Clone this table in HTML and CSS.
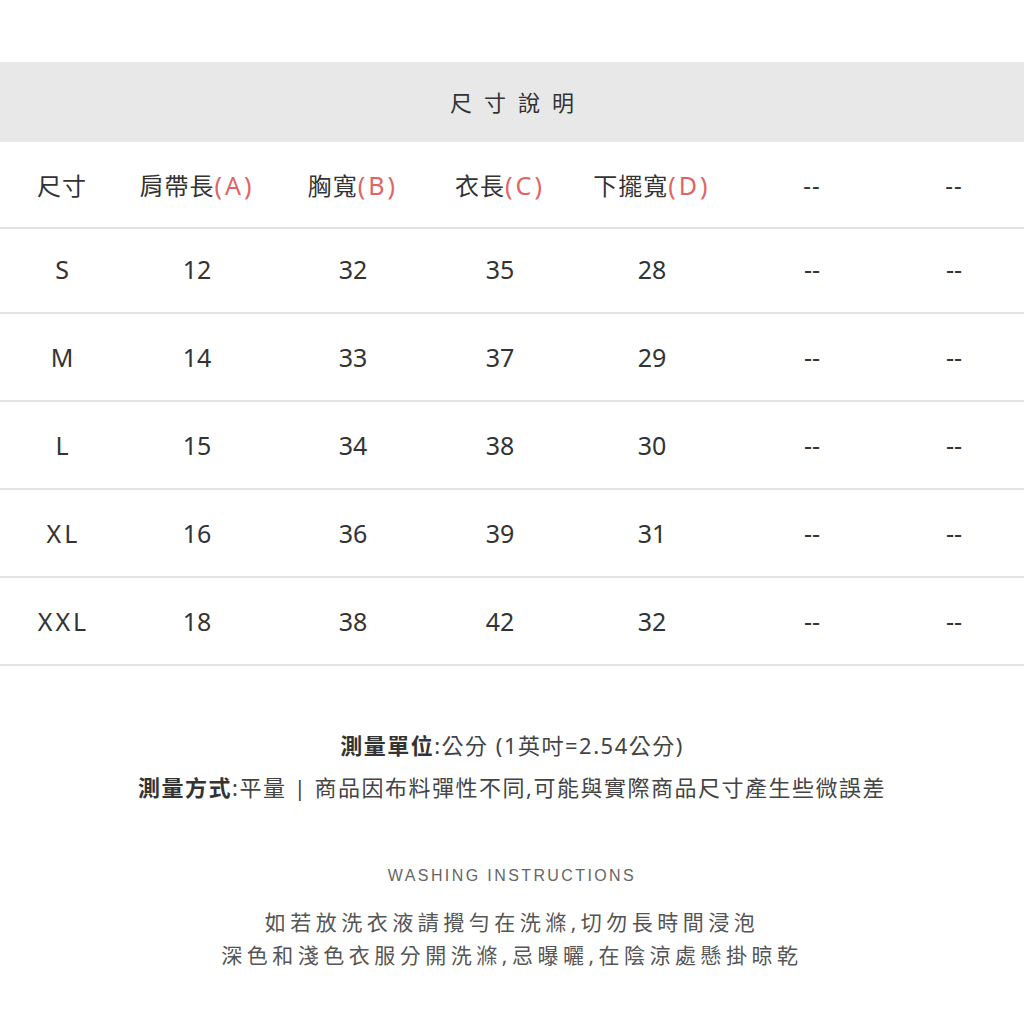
FILE: index.html
```html
<!DOCTYPE html>
<html lang="zh-Hant">
<head>
<meta charset="utf-8">
<link rel="stylesheet" href="styles.css">
</head>
<body>
<div class="page">
  <div class="title-band"><h1 class="title">尺寸說明</h1></div>
  <div class="table">
    <div class="row head">
      <div class="cell">尺寸</div>
      <div class="cell">肩帶長<span class="red">(A)</span></div>
      <div class="cell">胸寬<span class="red">(B)</span></div>
      <div class="cell">衣長<span class="red">(C)</span></div>
      <div class="cell">下擺寬<span class="red">(D)</span></div>
      <div class="cell">--</div>
      <div class="cell">--</div>
    </div>
    <div class="row first">
      <div class="cell sz">S</div><div class="cell">12</div><div class="cell">32</div><div class="cell">35</div><div class="cell">28</div><div class="cell">--</div><div class="cell">--</div>
    </div>
    <div class="row">
      <div class="cell sz">M</div><div class="cell">14</div><div class="cell">33</div><div class="cell">37</div><div class="cell">29</div><div class="cell">--</div><div class="cell">--</div>
    </div>
    <div class="row">
      <div class="cell sz">L</div><div class="cell">15</div><div class="cell">34</div><div class="cell">38</div><div class="cell">30</div><div class="cell">--</div><div class="cell">--</div>
    </div>
    <div class="row">
      <div class="cell sz">XL</div><div class="cell">16</div><div class="cell">36</div><div class="cell">39</div><div class="cell">31</div><div class="cell">--</div><div class="cell">--</div>
    </div>
    <div class="row">
      <div class="cell sz">XXL</div><div class="cell">18</div><div class="cell">38</div><div class="cell">42</div><div class="cell">32</div><div class="cell">--</div><div class="cell">--</div>
    </div>
  </div>
  <div class="notes">
    <p class="note"><b>測量單位</b>:公分 (1英吋=2.54公分)</p>
    <p class="note"><b>測量方式</b>:平量 | 商品因布料彈性不同,可能與實際商品尺寸產生些微誤差</p>
  </div>
  <div class="wash">
    <h2 class="wash-title">WASHING INSTRUCTIONS</h2>
    <p class="wash-line">如若放洗衣液請攪勻在洗滌,切勿長時間浸泡</p>
    <p class="wash-line">深色和淺色衣服分開洗滌,忌曝曬,在陰涼處懸掛晾乾</p>
  </div>
</div>
</body>
</html>
```
FILE: styles.css
```css
* { box-sizing: border-box; }
html, body { margin: 0; padding: 0; background: #fff; }
body {
  font-family: "Noto Sans", "Noto Sans CJK TC", sans-serif;
  color: #333;
  width: 1024px;
}
.page { padding-top: 62px; }
.title-band {
  background: #e8e8e8;
  height: 80px;
  display: flex;
  align-items: center;
  justify-content: center;
}
.title {
  margin: 0;
  font-weight: 400;
  font-size: 22px;
  letter-spacing: 12px;
  padding-left: 12px;
  margin-bottom: 2px;
  color: #333;
}
.table { display: flex; flex-direction: column; }
.row {
  display: grid;
  grid-template-columns: 124px 146px 166px 128px 176px 144px 140px;
  height: 88px;
  border-bottom: 2px solid #e2e2e2;
  align-items: center;
}
.row.head { height: 87px; }
.row.first { height: 85px; }
.row.first .cell { margin-bottom: 4px; }
.cell {
  text-align: center;
  font-size: 25px;
  white-space: nowrap;
}
.row.head .cell { font-size: 24px; letter-spacing: 1px; }
.row.head .red { font-size: 25px; letter-spacing: 3px; }
.sz { letter-spacing: 3px; padding-left: 3px; }
.red { color: #e06464; }
.notes {
  margin-top: 58px;
  text-align: center;
}
.note {
  margin: 0;
  font-size: 22px;
  line-height: 42px;
  letter-spacing: 1.5px;
  color: #444;
}
.note b { font-weight: 700; color: #333; }
.wash {
  margin-top: 59px;
  text-align: center;
}
.wash-title {
  margin: 0 0 21px;
  font-weight: 400;
  font-size: 16px;
  letter-spacing: 2.4px;
  color: #666;
  font-family: "Liberation Sans", "Noto Sans", sans-serif;
}
.wash-line {
  margin: 0;
  font-size: 21px;
  line-height: 33px;
  letter-spacing: 4.5px;
  color: #555;
}
```
